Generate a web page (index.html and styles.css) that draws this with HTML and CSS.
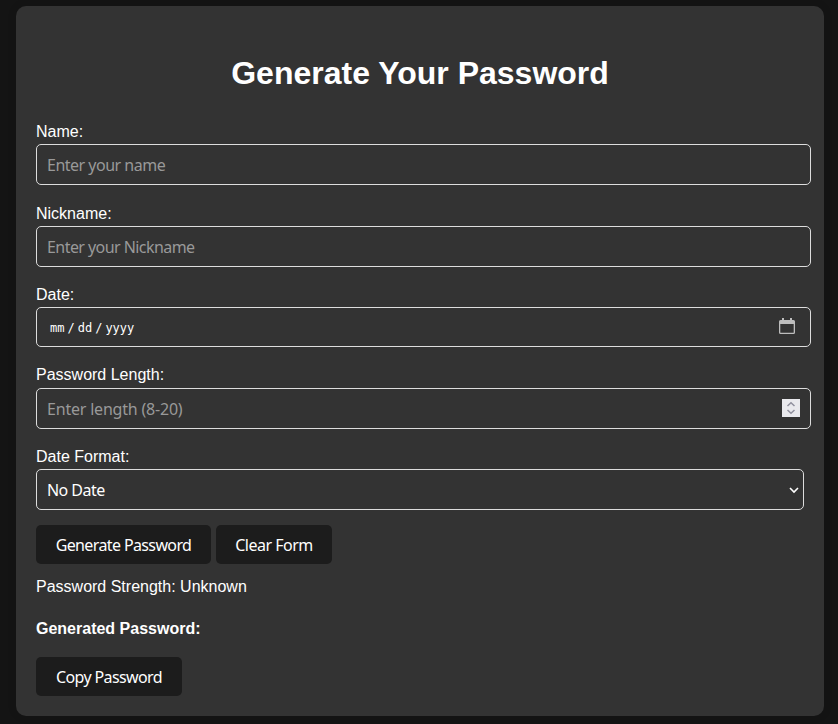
FILE: index.html
```html
<!DOCTYPE html>
<html lang="en">
<head>
<meta charset="utf-8">
<title>Generate Your Password</title>
<link rel="stylesheet" href="styles.css">
</head>
<body>
<main class="card">
  <h1>Generate Your Password</h1>
  <form>
    <div class="field">
      <label for="name">Name:</label>
      <input class="control t-name" id="name" type="text" placeholder="Enter your name">
    </div>
    <div class="field field-nick">
      <label for="nick">Nickname:</label>
      <input class="control t-nick" id="nick" type="text" placeholder="Enter your Nickname">
    </div>
    <div class="field field-date">
      <label>Date:</label>
      <div class="control control-date">
        <span class="date-parts"><span>mm</span><span>/</span><span>dd</span><span>/</span><span>yyyy</span></span>
        <svg class="calendar" width="16" height="16" viewBox="0 0 16 16"><path fill="#bdbdbd" fill-rule="evenodd" d="M3 0h2v2h6V0h2v2h1.500A1.500 1.500 0 0 1 16 3.500v11a1.500 1.500 0 0 1-1.500 1.500h-13A1.500 1.500 0 0 1 0 14.500v-11A1.500 1.500 0 0 1 1.500 2H3zM1.300 6v8.200q0 .6.6.6h12.200q.6 0 .6-.6V6z"/></svg>
      </div>
    </div>
    <div class="field field-length">
      <label for="length">Password Length:</label>
      <div class="control control-length">
        <input class="bare t-length" id="length" type="text" placeholder="Enter length (8-20)">
        <svg class="spinner" width="18" height="18" viewBox="0 0 18 18"><path fill="#e9e9ed" d="M0 0h18v18H0z"/><path fill="none" stroke="#8f8f9d" stroke-width="1.500" d="M5.500 7 9 3.800 12.500 7M5.500 11 9 14.200 12.500 11"/></svg>
      </div>
    </div>
    <div class="field">
      <label>Date Format:</label>
      <div class="control select">
        <span class="t-select">No Date</span>
        <svg class="chevron" width="10" height="8" viewBox="0 0 10 8"><path fill="none" stroke="#fff" stroke-width="1.600" d="M1 2 5 6 9 2"/></svg>
      </div>
    </div>
    <div class="actions">
      <button class="btn b-generate" type="button">Generate Password</button>
      <button class="btn b-clear" type="button">Clear Form</button>
    </div>
  </form>
  <p class="strength">Password Strength: Unknown</p>
  <p class="result">Generated Password:</p>
  <button class="btn b-copy" type="button">Copy Password</button>
</main>
</body>
</html>
```
FILE: styles.css
```css
* { box-sizing: border-box; }
body {
  margin: 0;
  padding: 6px 14px 8px 16px;
  background: #141414;
  color: #fff;
  font: 16px/18px "Liberation Sans", Arial, sans-serif;
}
.card {
  height: 710px;
  padding: 48px 13px 20px 20px;
  border-radius: 10px;
  background: #333;
  box-shadow: 0 0 10px rgba(0, 0, 0, 0.1);
}
h1 {
  margin: 0 7px 30px 0;
  font-size: 32px;
  line-height: 38px;
  text-align: center;
}
.field { margin-bottom: 19px; }
.field-nick, .field-date, .field-length { margin-bottom: 18px; }
label { display: block; height: 22px; padding-top: 1px; }
.field-length label { height: 23px; }
.control {
  display: flex;
  align-items: center;
  justify-content: space-between;
  width: 100%;
  height: 41px;
  padding: 0 10px;
  border: 1px solid #ddd;
  border-radius: 5px;
  background: #333;
  color: #fff;
  font: 16px/22px "Noto Sans", sans-serif;
}
.bare {
  flex: 1;
  min-width: 0;
  padding: 0;
  border: 0;
  background: none;
  color: #fff;
  font: inherit;
}
input::placeholder { color: #999; opacity: 1; }
.t-name { letter-spacing: -0.5px; }
.t-nick { letter-spacing: -0.56px; }
.t-length { letter-spacing: -0.2px; }
.t-select { letter-spacing: -0.55px; }
.control-date { height: 40px; padding: 0 15px 0 13px; }
.date-parts {
  display: flex;
  gap: 3px;
  padding-top: 1px;
  font-family: "DejaVu Sans Mono", monospace;
  font-size: 12px;
}
.calendar { margin-bottom: 2px; }
.spinner { margin-bottom: 1px; }
.select { width: 768px; padding-right: 4px; }
.actions { display: flex; gap: 5px; margin-top: -4px; }
.btn {
  display: block;
  height: 39px;
  padding: 0;
  border: 0;
  border-radius: 5px;
  background: #1c1c1c;
  color: #fff;
  font: 16px/22px "Noto Sans", sans-serif;
  letter-spacing: -0.62px;
}
.b-generate { width: 175px; }
.b-clear { width: 116px; letter-spacing: -0.5px; }
.b-copy { width: 146px; }
.strength { margin: 14px 0 24px; }
.result { margin: 0 0 19px; font-weight: bold; }
```
